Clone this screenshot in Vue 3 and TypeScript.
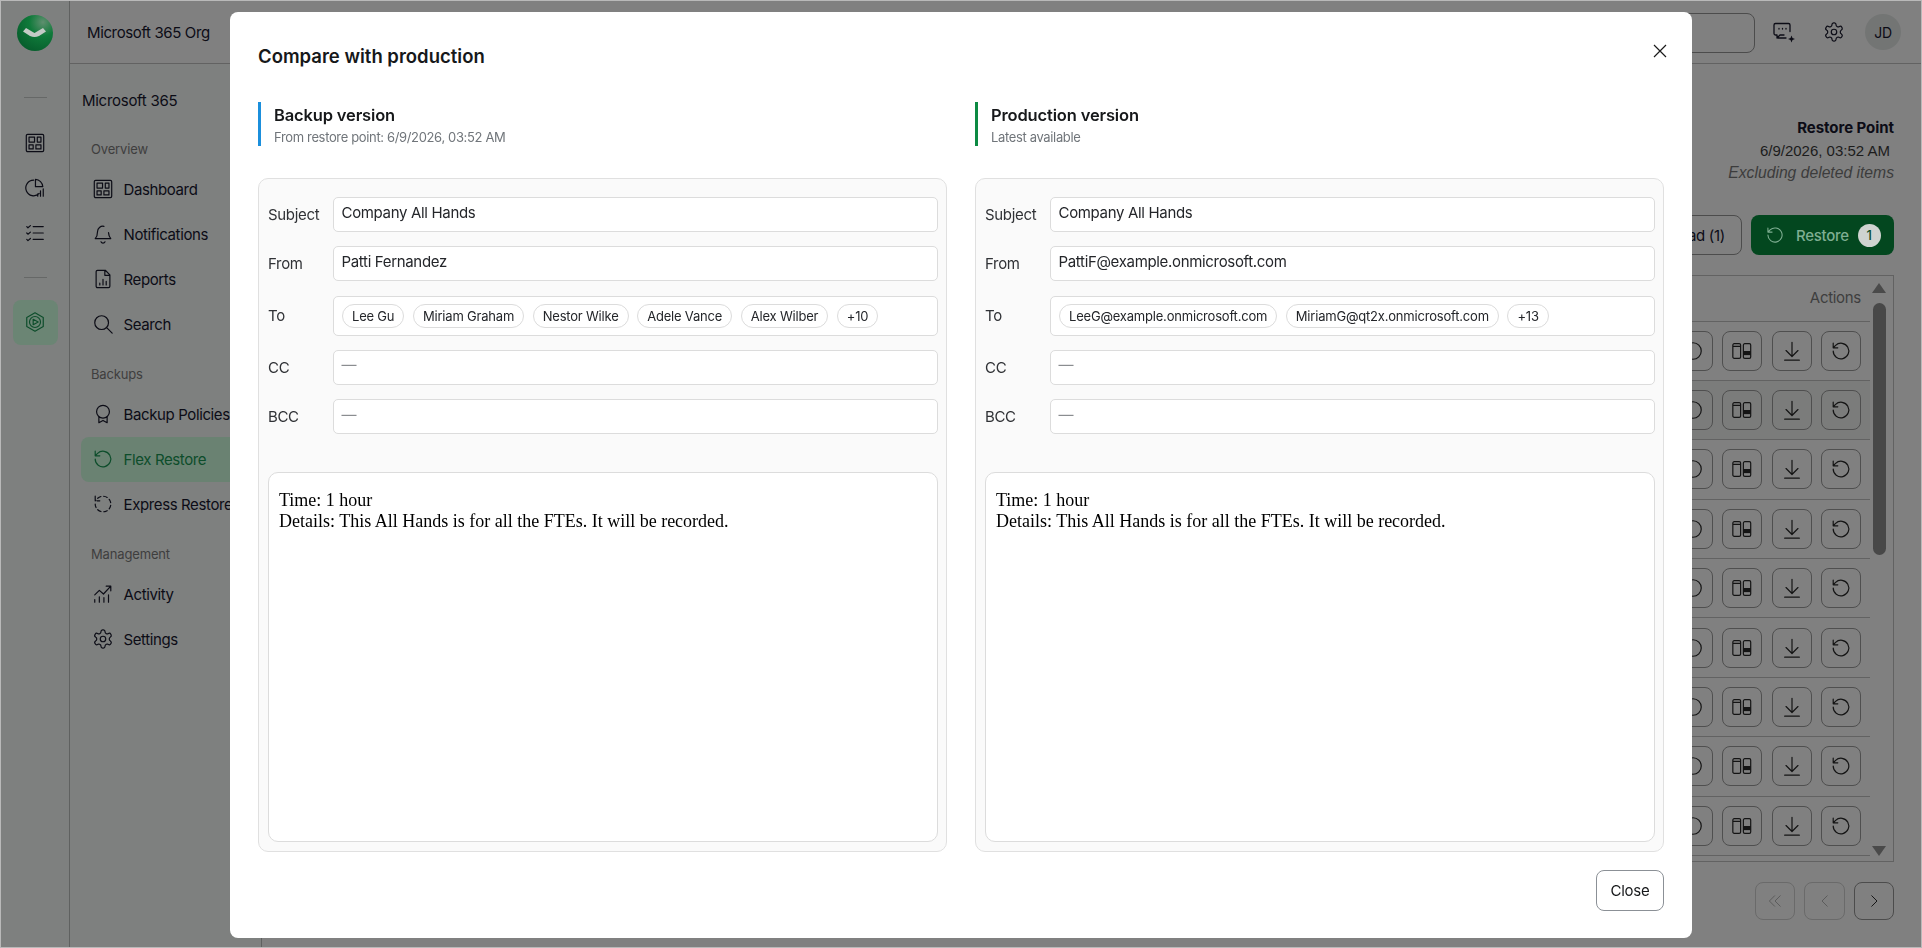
<template>
  <div class="app">
    <aside class="rail">
      <svg class="logo" viewBox="0 0 36 36">
        <defs>
          <radialGradient id="logoFill" cx="0.72" cy="0.2" r="0.95">
            <stop offset="0" stop-color="#5f8f6f" />
            <stop offset="0.4" stop-color="#0f7a3a" />
            <stop offset="1" stop-color="#05592a" />
          </radialGradient>
        </defs>
        <circle cx="18" cy="18" r="18" fill="url(#logoFill)" />
        <path d="M6 16.5l3-3.5 8.5 5 8.5-5 3 3.5-7 4.5q-4.5 1.8-9 0z" fill="#c4cbc6" />
      </svg>
      <div class="rail-line first"></div>
      <div v-for="name in railIcons" :key="name" class="rail-item">
        <svg class="ic ic-22" viewBox="0 0 24 24"><path :d="icons[name]" /></svg>
      </div>
      <div class="rail-line"></div>
      <div class="rail-item active">
        <svg class="ic ic-22" viewBox="0 0 24 24"><path :d="icons.hexPlay" /></svg>
      </div>
    </aside>

    <div class="content">
      <header class="topbar">
        <span class="org">Microsoft 365 Org</span>
        <div class="top-search"></div>
        <div class="top-icon">
          <svg class="ic ic-24" viewBox="0 0 24 24">
            <path :d="icons.chat" />
            <path class="solid" d="M19.5 15.5l1 2.5 2.5 1-2.5 1-1 2.5-1-2.5-2.5-1 2.5-1z" />
          </svg>
        </div>
        <div class="top-icon">
          <svg class="ic ic-22" viewBox="0 0 24 24"><path :d="icons.gear" /></svg>
        </div>
        <div class="avatar">JD</div>
      </header>

      <div class="below">
        <nav class="sidebar">
          <div class="side-title">Microsoft 365</div>
          <section v-for="group in navGroups" :key="group.label" class="side-group">
            <div class="side-label">{{ group.label }}</div>
            <div v-for="item in group.items" :key="item.label" class="side-item" :class="{ current: item.current }">
              <svg class="ic ic-22" viewBox="0 0 24 24" :class="{ dashed: item.dashed }"><path :d="icons[item.icon]" /></svg>
              <span>{{ item.label }}</span>
            </div>
          </section>
        </nav>

        <main class="main">
          <div class="point">
            <div class="point-title">Restore Point</div>
            <div class="point-date">6/9/2026, 03:52 AM</div>
            <div class="point-note">Excluding deleted items</div>
          </div>
          <div class="actions">
            <button class="btn-outline">Download (1)</button>
            <button class="btn-restore">
              <svg class="ic ic-20" viewBox="0 0 24 24"><path :d="icons.restore" /></svg>
              <span>Restore</span>
              <span class="count">1</span>
            </button>
          </div>
          <div class="table">
            <div class="table-body">
              <div class="table-head">Actions</div>
              <div v-for="n in 9" :key="n" class="row" :class="{ hovered: n === 2 }">
                <button class="row-btn">
                  <svg class="ic ic-22" viewBox="0 0 24 24"><circle cx="12" cy="12" r="9" /></svg>
                </button>
                <button class="row-btn">
                  <svg class="ic ic-22" viewBox="0 0 24 24">
                    <path :d="icons.compare" />
                    <path class="solid" d="M13.5 12h8v4.5h-8z" />
                  </svg>
                </button>
                <button class="row-btn">
                  <svg class="ic ic-22" viewBox="0 0 24 24"><path :d="icons.download" /></svg>
                </button>
                <button class="row-btn">
                  <svg class="ic ic-22" viewBox="0 0 24 24"><path :d="icons.restore" /></svg>
                </button>
              </div>
            </div>
            <div class="scroll">
              <div class="arrow up"></div>
              <div class="thumb"></div>
              <div class="arrow down"></div>
            </div>
          </div>
          <div class="pager">
            <button class="page-btn off">
              <svg class="ic ic-18" viewBox="0 0 24 24"><path d="M11.5 5l-7 7 7 7M19 5l-7 7 7 7" /></svg>
            </button>
            <button class="page-btn off wide">
              <svg class="ic ic-18" viewBox="0 0 24 24"><path d="M15 5l-7 7 7 7" /></svg>
            </button>
            <button class="page-btn">
              <svg class="ic ic-18" viewBox="0 0 24 24"><path d="M9 5l7 7-7 7" /></svg>
            </button>
          </div>
        </main>
      </div>
    </div>

    <div class="modal-wrap">
      <div class="modal">
        <div class="modal-head">
          <h2>Compare with production</h2>
          <button class="modal-x" aria-label="Close">
            <svg viewBox="0 0 16 16"><path d="M2 2l12 12M14 2L2 14" /></svg>
          </button>
        </div>

        <div class="columns">
          <div v-for="col in columns" :key="col.title" class="column">
            <div class="col-head" :class="col.tone">
              <div class="col-title">{{ col.title }}</div>
              <div class="col-sub">{{ col.sub }}</div>
            </div>
            <div class="panel">
              <div class="fields">
                <div class="label">Subject</div>
                <div class="value">Company All Hands</div>
                <div class="label">From</div>
                <div class="value">{{ col.from }}</div>
                <div class="label">To</div>
                <div class="value chips">
                  <span v-for="chip in col.to" :key="chip" class="chip">{{ chip }}</span>
                </div>
                <div class="label">CC</div>
                <div class="value empty">—</div>
                <div class="label">BCC</div>
                <div class="value empty">—</div>
              </div>
              <div class="mail-body">
                Time: 1 hour<br />
                Details: This All Hands is for all the FTEs. It will be recorded.
              </div>
            </div>
          </div>
        </div>

        <div class="modal-foot">
          <button class="close-btn">Close</button>
        </div>
      </div>
    </div>
  </div>
</template>

<script setup lang="ts">
interface NavItem {
  label: string;
  icon: string;
  current?: boolean;
  dashed?: boolean;
}

const icons: Record<string, string> = {
  dashboard:
    'M4 2.5h16a1.5 1.5 0 0 1 1.5 1.5v16a1.5 1.5 0 0 1-1.5 1.5H4A1.5 1.5 0 0 1 2.5 20V4A1.5 1.5 0 0 1 4 2.5zM5.5 5.5h6v5.5h-6zM14.5 5.5h4v5.5h-4zM5.5 14h4.5v4.5H5.5zM13 14h5.5v4.5H13z',
  pie: 'M10.5 3.5a8.5 8.5 0 1 0 6 14.5M12.5 2.5a8.5 8.5 0 0 1 8 8h-8zM15 21v-2.5M18 21v-6M21 21v-8',
  checklist:
    'M3 5l1.3 1.3L7 4M3 12l1.3 1.3L7 11M3 19l1.3 1.3L7 18M10 5h11M10 12h11M10 19h11',
  hexPlay:
    'M12 2l9 5v10l-9 5-9-5V7zM12 6a6 6 0 1 1 0 12a6 6 0 0 1 0-12zM10 9l5.5 3-5.5 3z',
  bell: 'M13 3.6a6 6 0 0 0-7 5.9c0 5-2.5 7.5-2.5 7.5h17s-2.2-2.2-2.5-6.5M9.8 20.5a2.4 2.4 0 0 0 4.4 0',
  report:
    'M6 2.5h8.5l5 5V20a1.5 1.5 0 0 1-1.5 1.5H6A1.5 1.5 0 0 1 4.5 20V4A1.5 1.5 0 0 1 6 2.5zM14 3v5h5M8.5 18.5v-2M12 18.5v-6M15.5 18.5v-4',
  search: 'M10.5 3a7.5 7.5 0 1 0 0 15a7.5 7.5 0 0 0 0-15zM16 16l6 6',
  award:
    'M12 2.5a7 7 0 1 0 0 14a7 7 0 0 0 0-14zM7.5 15v6.5l4.5-2.5 4.5 2.5V15',
  restore: 'M3.5 12a8.5 8.5 0 1 0 2.6-6.1L3.5 8.5M3.5 3.5v5h5',
  activity:
    'M3 21v-3M8 21v-6M13 21v-5M18 21v-8M3 13l5-5 4.5 4L20 4M15.5 3.5h5v5',
  gear: 'M12.22 2h-.44a2 2 0 0 0-2 2v.18a2 2 0 0 1-1 1.73l-.43.25a2 2 0 0 1-2 0l-.15-.08a2 2 0 0 0-2.73.73l-.22.38a2 2 0 0 0 .73 2.73l.15.1a2 2 0 0 1 1 1.72v.51a2 2 0 0 1-1 1.74l-.15.09a2 2 0 0 0-.73 2.73l.22.38a2 2 0 0 0 2.73.73l.15-.08a2 2 0 0 1 2 0l.43.25a2 2 0 0 1 1 1.73V20a2 2 0 0 0 2 2h.44a2 2 0 0 0 2-2v-.18a2 2 0 0 1 1-1.73l.43-.25a2 2 0 0 1 2 0l.15.08a2 2 0 0 0 2.73-.73l.22-.39a2 2 0 0 0-.73-2.73l-.15-.08a2 2 0 0 1-1-1.74v-.5a2 2 0 0 1 1-1.74l.15-.09a2 2 0 0 0 .73-2.73l-.22-.38a2 2 0 0 0-2.73-.73l-.15.08a2 2 0 0 1-2 0l-.43-.25a2 2 0 0 1-1-1.73V4a2 2 0 0 0-2-2zM12 9a3 3 0 1 0 0 6a3 3 0 0 0 0-6z',
  chat: 'M3.5 3.5h13a1.5 1.5 0 0 1 1.5 1.5v6.5M3.5 3.5A1.5 1.5 0 0 0 2 5v8.5a1.5 1.5 0 0 0 1.5 1.5H5v3l3-3h4M7 8.5v.5M10.5 8.5v.5M14 8.5v.5M6 18h8',
  compare:
    'M3.5 4h5.5a1.5 1.5 0 0 1 1.5 1.5v13A1.5 1.5 0 0 1 9 20H3.5A1.5 1.5 0 0 1 2 18.5v-13A1.5 1.5 0 0 1 3.5 4zM2 7h8.5M15 4h5a1.5 1.5 0 0 1 1.5 1.5v13a1.5 1.5 0 0 1-1.5 1.5h-5a1.5 1.5 0 0 1-1.5-1.5v-13A1.5 1.5 0 0 1 15 4z',
  download: 'M12 2.5V18M5.5 11.5L12 18l6.5-6.5M4 22h16',
};

const railIcons = ['dashboard', 'pie', 'checklist'];

const navGroups: { label: string; items: NavItem[] }[] = [
  {
    label: 'Overview',
    items: [
      { label: 'Dashboard', icon: 'dashboard' },
      { label: 'Notifications', icon: 'bell' },
      { label: 'Reports', icon: 'report' },
      { label: 'Search', icon: 'search' },
    ],
  },
  {
    label: 'Backups',
    items: [
      { label: 'Backup Policies', icon: 'award' },
      { label: 'Flex Restore', icon: 'restore', current: true },
      { label: 'Express Restore', icon: 'restore', dashed: true },
    ],
  },
  {
    label: 'Management',
    items: [
      { label: 'Activity', icon: 'activity' },
      { label: 'Settings', icon: 'gear' },
    ],
  },
];

const columns = [
  {
    title: 'Backup version',
    sub: 'From restore point: 6/9/2026, 03:52 AM',
    tone: 'blue',
    from: 'Patti Fernandez',
    to: ['Lee Gu', 'Miriam Graham', 'Nestor Wilke', 'Adele Vance', 'Alex Wilber', '+10'],
  },
  {
    title: 'Production version',
    sub: 'Latest available',
    tone: 'green',
    from: 'PattiF@example.onmicrosoft.com',
    to: ['LeeG@example.onmicrosoft.com', 'MiriamG@qt2x.onmicrosoft.com', '+13'],
  },
];
</script>

<style>
html,
body {
  margin: 0;
  height: 100%;
  overflow: hidden;
}
</style>

<style scoped>
.app {
  display: flex;
  height: 100vh;
  box-sizing: border-box;
  border: 1px solid #b9b9b9;
  background: #808080;
  color: #0c0c16;
  font-family: Inter, "Liberation Sans", sans-serif;
  font-size: 14px;
  overflow: hidden;
}

button {
  font-family: inherit;
  background: none;
  padding: 0;
}

.ic {
  fill: none;
  stroke: currentColor;
  stroke-width: 1.3;
  stroke-linecap: round;
  stroke-linejoin: round;
  flex-shrink: 0;
}
.ic .solid { fill: currentColor; stroke: none; }
.ic-18 { width: 18px; height: 18px; }
.ic-20 { width: 20px; height: 20px; }
.ic-22 { width: 22px; height: 22px; }
.ic-24 { width: 24px; height: 24px; }
.dashed { stroke-dasharray: 4 3; }

/* icon rail */
.rail {
  width: 68px;
  flex-shrink: 0;
  display: flex;
  flex-direction: column;
  align-items: center;
  padding-top: 14px;
  background: #7e807f;
  border-right: 1px solid #5f6160;
  box-sizing: content-box;
}
.logo { width: 36px; height: 36px; }
.rail-line {
  width: 23px;
  height: 1px;
  background: #666867;
  margin: 21.5px 0 22px;
}
.rail-line.first { margin-top: 46px; }
.rail-item {
  width: 45px;
  height: 45px;
  display: flex;
  align-items: center;
  justify-content: center;
  border-radius: 8px;
}
.rail-item.active {
  background: #6b8574;
  color: #0d4d2b;
}

.content {
  flex: 1;
  min-width: 0;
  display: flex;
  flex-direction: column;
}

/* top bar */
.topbar {
  height: 63px;
  box-sizing: border-box;
  flex-shrink: 0;
  display: flex;
  align-items: center;
  gap: 13.5px;
  padding-right: 20px;
  border-bottom: 1px solid #626262;
}
.org {
  font-size: 15px;
  letter-spacing: -0.38px;
  margin-left: 17px;
  margin-right: auto;
}
.top-search {
  width: 300px;
  height: 40px;
  box-sizing: border-box;
  border: 1px solid #4c4c4c;
  border-radius: 8px;
  margin-right: -2.5px;
  margin-top: 2px;
}
.top-icon {
  width: 36px;
  display: flex;
  justify-content: center;
}
.avatar {
  width: 36px;
  height: 36px;
  border-radius: 50%;
  background: #737574;
  display: flex;
  align-items: center;
  justify-content: center;
  font-size: 14px;
  letter-spacing: -0.2px;
}

.below {
  flex: 1;
  min-height: 0;
  display: flex;
}

/* sidebar */
.sidebar {
  width: 192px;
  flex-shrink: 0;
  box-sizing: border-box;
  padding: 27px 0 0 11px;
  background: #7e807f;
  border-right: 1px solid #5f6160;
  white-space: nowrap;
}
.side-title {
  line-height: 20px;
  font-size: 15px;
  letter-spacing: -0.28px;
  margin-left: 1px;
  padding-bottom: 10.5px;
}
.side-group { margin-top: 17.5px; }
.side-label {
  height: 20px;
  line-height: 20px;
  font-size: 13px;
  letter-spacing: -0.15px;
  color: #3e3e3e;
  margin: 0 0 7.5px 10px;
}
.side-item {
  height: 45px;
  display: flex;
  align-items: center;
  gap: 9.5px;
  padding-left: 11px;
  font-size: 15px;
  letter-spacing: -0.38px;
  border-radius: 8px;
}
.side-item.current {
  background: #6a8272;
  color: #0d4d2b;
}

/* main behind the dialog */
.main {
  flex: 1;
  min-width: 0;
  display: flex;
  flex-direction: column;
  padding: 53px 27px 0 0;
}
.point {
  text-align: right;
  line-height: 22.5px;
}
.point-title { font-size: 15px; font-weight: 700; letter-spacing: -0.05px; }
.point-date { font-family: "Liberation Sans", Arial, sans-serif; font-size: 15px; color: #1c1c1c; margin-right: 4px; }
.point-note { font-family: "Liberation Sans", Arial, sans-serif; font-size: 15.7px; font-style: italic; color: #3c3c3c; }

.actions {
  display: flex;
  justify-content: flex-end;
  gap: 9px;
  margin-top: 30.5px;
}
.btn-outline {
  height: 40px;
  box-sizing: border-box;
  padding: 0 16px;
  border: 1px solid #4c4c4c;
  border-radius: 8px;
  color: #0c0c16;
  font-size: 15px;
  letter-spacing: -0.3px;
}
.btn-restore {
  width: 143px;
  height: 40px;
  border: none;
  border-radius: 8px;
  background: #03471f;
  color: #7fae92;
  font-size: 15px;
  font-weight: 500;
  letter-spacing: -0.3px;
  display: flex;
  align-items: center;
  padding-left: 14px;
  gap: 11px;
}
.count {
  width: 23px;
  height: 23px;
  border-radius: 50%;
  background: #cfd3d0;
  color: #0d4d2b;
  font-size: 13px;
  line-height: 23px;
  text-align: center;
  margin-left: -2px;
}

.table {
  display: flex;
  margin-top: 20px;
  height: 587px;
  border-top: 1px solid #626262;
  border-right: 1px solid #626262;
  border-bottom: 1px solid #626262;
  box-sizing: border-box;
}
.table-body {
  flex: 1;
  min-width: 0;
}
.table-head {
  height: 45.5px;
  line-height: 44px;
  text-align: right;
  padding-right: 9px;
  color: #3e3e3e;
  font-size: 15px;
  letter-spacing: -0.3px;
  border-bottom: 1px solid #626262;
  box-sizing: border-box;
}
.row {
  height: 59.4px;
  box-sizing: border-box;
  display: flex;
  align-items: center;
  justify-content: flex-end;
  gap: 9.4px;
  padding-right: 9px;
  border-bottom: 1px solid #626262;
}
.row.hovered { background: #7b7c7b; }
.row-btn {
  width: 40px;
  height: 40px;
  display: flex;
  align-items: center;
  justify-content: center;
  border: 1px solid #4f4f4f;
  border-radius: 8px;
  color: #141414;
}
.scroll {
  width: 23px;
  flex-shrink: 0;
  display: flex;
  flex-direction: column;
  align-items: center;
  padding-top: 7px;
  padding-right: 5px;
  box-sizing: border-box;
}
.arrow {
  width: 0;
  height: 0;
  border-left: 7px solid transparent;
  border-right: 7px solid transparent;
}
.arrow.up { border-bottom: 10px solid #4a4a4a; }
.arrow.down { border-top: 10px solid #4a4a4a; margin-top: auto; margin-bottom: 5px; }
.thumb {
  width: 13px;
  height: 252px;
  border-radius: 6.5px;
  background: #484848;
  margin-top: 10px;
}

.pager {
  display: flex;
  justify-content: flex-end;
  gap: 9px;
  margin-top: 20px;
}
.page-btn {
  width: 40px;
  height: 38px;
  display: flex;
  align-items: center;
  justify-content: center;
  border: 1px solid #4c4c4c;
  border-radius: 8px;
  color: #141414;
}
.page-btn.wide { width: 41px; }
.page-btn.off {
  border-color: #6a6a6a;
  color: #5a5a5a;
}

/* dialog */
.modal-wrap {
  position: fixed;
  inset: 0;
  display: flex;
  align-items: center;
  justify-content: center;
  padding-top: 2px;
  box-sizing: border-box;
}
.modal {
  width: 1462px;
  height: 926px;
  box-sizing: border-box;
  background: #fff;
  border-radius: 8px;
  padding: 0 28px;
  display: flex;
  flex-direction: column;
  color: #16181a;
}
.modal-head {
  height: 90px;
  flex-shrink: 0;
  display: flex;
  justify-content: space-between;
  padding-top: 32px;
  box-sizing: border-box;
}
.modal-head h2 {
  margin: 0;
  font-size: 18.5px;
  line-height: 24px;
  font-weight: 600;
}
.modal-x {
  width: 16px;
  height: 16px;
  border: none;
  margin: -1px -4px 0 0;
}
.modal-x svg {
  display: block;
  width: 16px;
  height: 16px;
  fill: none;
  stroke: #1b1b1b;
  stroke-width: 1.2;
}
.columns {
  flex: 1;
  min-height: 0;
  display: grid;
  grid-template-columns: 1fr 1fr;
  gap: 28px;
}
.column {
  display: flex;
  flex-direction: column;
  min-width: 0;
}
.col-head {
  height: 44px;
  border-left: 3px solid;
  padding: 1px 0 0 13px;
  flex-shrink: 0;
  box-sizing: border-box;
}
.col-head.blue { border-color: #1b8fdc; }
.col-head.green { border-color: #0c8a43; }
.col-title {
  font-size: 16.5px;
  line-height: 24px;
  font-weight: 600;
  letter-spacing: -0.15px;
}
.col-sub {
  font-size: 13px;
  line-height: 18px;
  margin-top: 1px;
  letter-spacing: -0.35px;
  color: #70757a;
}
.panel {
  flex: 1;
  margin-top: 32px;
  display: flex;
  flex-direction: column;
  box-sizing: border-box;
  padding: 18px 8px 9px 9px;
  background: #fafafa;
  border: 1px solid #e0e0e0;
  border-radius: 10px;
}
.fields {
  display: grid;
  grid-template-columns: 64.5px 1fr;
  row-gap: 14.25px;
  align-items: center;
  font-size: 15px;
  letter-spacing: -0.33px;
}
.label { color: #303236; }
.value {
  box-sizing: border-box;
  min-height: 35px;
  padding: 4.5px 8px 0;
  line-height: 20px;
  background: #fff;
  border: 1px solid #dcdcdc;
  border-radius: 5px;
  color: #24262a;
}
.value.empty { color: #8a8d90; }
.value.chips {
  display: flex;
  gap: 8.6px;
  min-height: 39.5px;
  padding: 7px 8.5px;
}
.chip {
  height: 24px;
  line-height: 22px;
  box-sizing: border-box;
  padding: 0 9px;
  border: 1px solid #dcdcdc;
  border-radius: 12px;
  font-size: 13px;
  letter-spacing: -0.2px;
  white-space: nowrap;
}
.mail-body {
  flex: 1;
  margin-top: 37.5px;
  box-sizing: border-box;
  padding: 17px 10px;
  background: #fff;
  border: 1px solid #dcdcdc;
  border-radius: 10px;
  font-family: "Liberation Serif", "Times New Roman", serif;
  font-size: 18px;
  line-height: 21px;
  color: #000;
}
.modal-foot {
  height: 86px;
  flex-shrink: 0;
  display: flex;
  justify-content: flex-end;
  padding-top: 18px;
  box-sizing: border-box;
}
.close-btn {
  width: 68px;
  height: 41px;
  border: 1px solid #8b9096;
  border-radius: 8px;
  font-size: 15px;
  letter-spacing: -0.2px;
  color: #16181a;
}
</style>
